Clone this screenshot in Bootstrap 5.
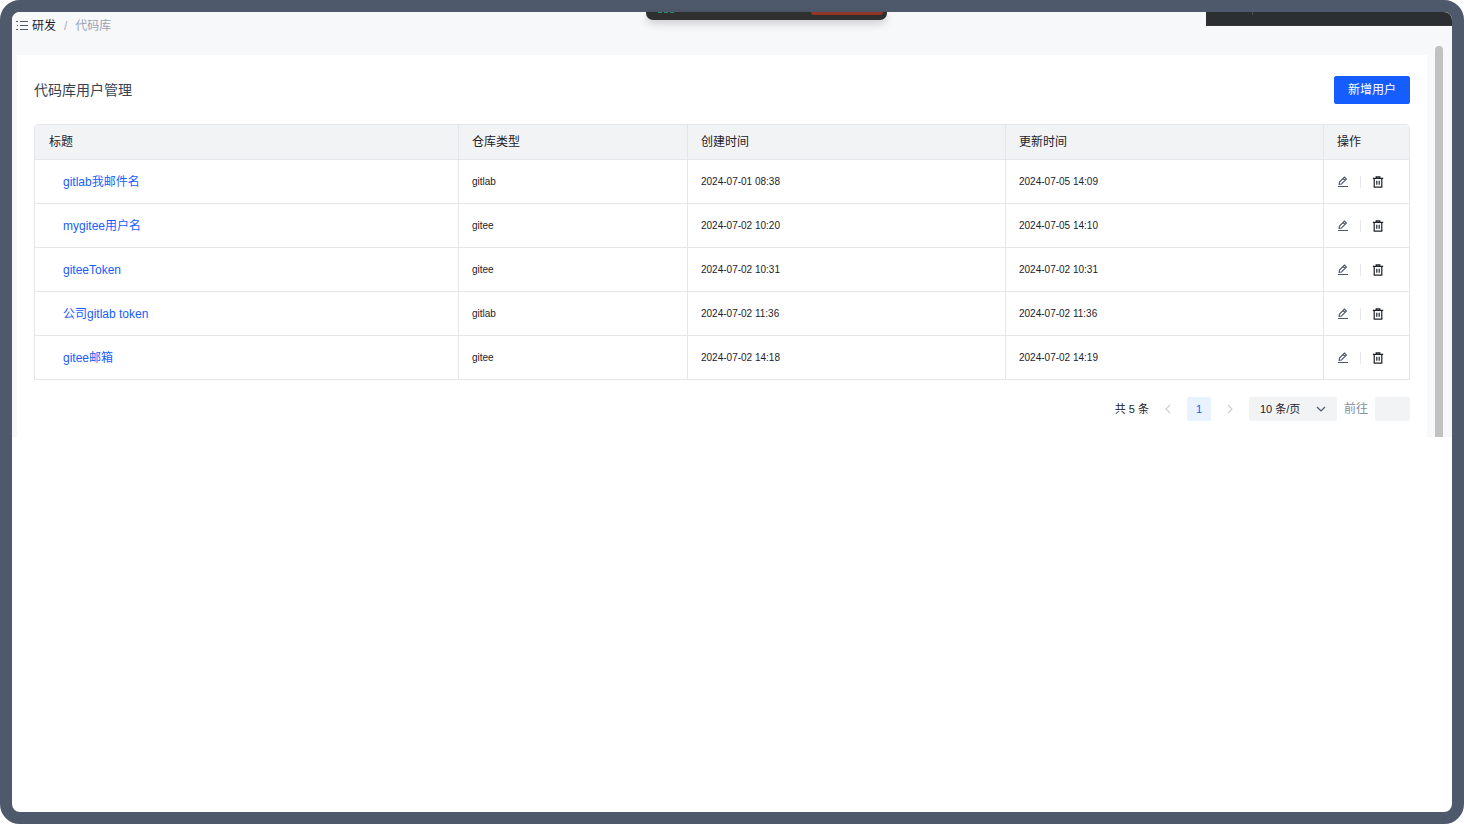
<!DOCTYPE html>
<html lang="zh-CN">
<head>
<meta charset="utf-8">
<meta name="viewport" content="width=device-width, initial-scale=1">
<title>代码库用户管理</title>
<link href="https://cdn.jsdelivr.net/npm/bootstrap@5.3.0/dist/css/bootstrap.min.css" rel="stylesheet">
<style>
  :root { --line: #e5e6eb; --fill: #f2f3f5; --ink: #1d2129; --blue: #165dff; --muted: #86909c; }
  body { font: 12px/20px "Liberation Sans", "Noto Sans CJK SC", sans-serif; color: var(--ink); background: #fff; }
  .frame { border: 12px solid #4e5a6b; border-radius: 20px; background: #fff; }
  .app { background: #f7f8fa; border-radius: 8px 8px 0 0; }
  .app-head { height: 34px; padding: 4px 4px 0; }
  .breadcrumb { --bs-breadcrumb-item-padding-x: 8px; --bs-breadcrumb-divider-color: #a9aeb8; --bs-breadcrumb-item-active-color: #98a3b5; font-size: 12px; }
  .breadcrumb a { color: var(--ink); }
  .list-icon { color: #4e5969; margin-right: 3px; }
  .call-bar { left: 634px; top: 0; width: 241px; height: 8px; background: #2f2f2f; border-radius: 0 0 7px 7px; box-shadow: 0 3px 9px #0003; }
  .call-end { right: 4px; top: 0; width: 72px; height: 3px; background: #943527; border-radius: 0 0 4px 4px; }
  .call-dots { left: 12px; top: 0; width: 17px; height: 1px; background: repeating-linear-gradient(90deg, #1f9460 0 4px, transparent 4px 6px); }
  .dark-bar { right: 0; top: 0; width: 246px; height: 14px; background: #2b2f32; border-bottom: 1px solid #3a3535; border-radius: 0 8px 0 0; }
  .dark-tick { left: 46px; top: 0; width: 1px; height: 3px; background: #4a4e51; }
  .panel { margin: 9px 8px 0 5px; padding: 21px 17px 16px; background: #fff; min-width: 0; }
  .panel h1 { font-size: 14px; line-height: 22px; color: #37424f; }
  .btn-add { --bs-btn-bg: var(--blue); --bs-btn-color: #fff; --bs-btn-hover-bg: #4080ff; --bs-btn-hover-color: #fff; --bs-btn-padding-x: 13px; --bs-btn-padding-y: 3px; --bs-btn-font-size: 12px; --bs-btn-line-height: 20px; --bs-btn-border-radius: 2px; --bs-btn-border-color: var(--blue); }
  .grid-box { border: 1px solid var(--line); border-radius: 4px 4px 0 0; overflow: hidden; margin-top: 20px; }
  .grid-box table { table-layout: fixed; --bs-table-bg: transparent; --bs-table-color: var(--ink); border-collapse: separate; border-spacing: 0; }
  .grid-box th, .grid-box td { padding: 0 13px; height: 44px; border-bottom: 1px solid var(--line); border-right: 1px solid var(--line); font-weight: 400; }
  .grid-box th { height: 35px; background: var(--fill); vertical-align: middle; }
  .grid-box th:first-child { padding-left: 14px; }
  .grid-box tr > :last-child { border-right: 0; }
  .grid-box tbody tr:last-child td { height: 43px; border-bottom: 0; }
  .grid-box td:first-child { padding-left: 28px; }
  .grid-box td.cell-sm { font-size: 10px; }
  .grid-box a { color: var(--blue); }
  .c-type { width: 229px; } .c-time { width: 318px; } .c-ops { width: 85px; }
  .icon-btn { width: 12px; height: 12px; color: #4e5969; }
  .icon-btn.del { color: var(--ink); }
  .sep { width: 1px; height: 12px; background: var(--line); margin: 0 11px; }
  svg { display: block; fill: none; stroke: currentColor; }
  .pager { margin-top: 17px; height: 24px; gap: 7px; font-size: 11px; }
  .pg { width: 24px; height: 24px; color: #c9cdd4; border-radius: 2px; }
  .pg.on { background: #e8f3ff; color: var(--blue); }
  .size-pick { width: 88px; height: 24px; border-radius: 2px; background: var(--fill) url("data:image/svg+xml,%3Csvg xmlns='http://www.w3.org/2000/svg' viewBox='0 0 10 10' fill='none' stroke='%234e5969' stroke-width='1.2'%3E%3Cpath d='M1 3l4 4 4-4'/%3E%3C/svg%3E") no-repeat right 11px center / 10px 10px; appearance: none; color: var(--ink); padding: 0 11px; }
  .jump-label { color: var(--muted); font-size: 12px; }
  .jump { width: 35px; height: 24px; background: var(--fill); border-radius: 2px; }
  .scroll-bar { width: 8px; margin-right: 9px; background: #c1c1c1; border-radius: 4px 4px 0 0; }
</style>
</head>
<body>
<div class="frame min-vh-100">
  <div class="app position-relative">
    <header class="app-head">
      <nav class="d-flex align-items-center" aria-label="breadcrumb">
        <svg class="list-icon" width="13" height="12" viewBox="0 0 13 12" stroke-width="1.2"><path d="M0 1.5h2M4 1.5h8M1 5.5h1M4 5.5h8M0 9.5h2M4 9.5h8"/></svg>
        <ol class="breadcrumb mb-0">
          <li class="breadcrumb-item"><a class="text-decoration-none" href="#">研发</a></li>
          <li class="breadcrumb-item active" aria-current="page">代码库</li>
        </ol>
      </nav>
    </header>
    <div class="call-bar position-absolute"><span class="call-dots position-absolute"></span><span class="call-end position-absolute"></span></div>
    <div class="dark-bar position-absolute"><span class="dark-tick position-absolute"></span></div>

    <div class="d-flex">
      <main class="panel flex-grow-1">
        <div class="d-flex justify-content-between align-items-center">
          <h1 class="mb-0 fw-normal">代码库用户管理</h1>
          <button type="button" class="btn btn-add">新增用户</button>
        </div>
        <div class="grid-box">
          <table class="table mb-0 align-middle">
            <thead>
              <tr><th scope="col">标题</th><th scope="col" class="c-type">仓库类型</th><th scope="col" class="c-time">创建时间</th><th scope="col" class="c-time">更新时间</th><th scope="col" class="c-ops">操作</th></tr>
            </thead>
            <tbody id="rows"></tbody>
          </table>
        </div>
        <div class="pager d-flex justify-content-end align-items-center">
          <span>共 5 条</span>
          <button type="button" class="pg btn p-0 border-0 d-flex align-items-center justify-content-center" aria-label="上一页"><svg width="8" height="10" viewBox="0 0 8 10" stroke-width="1.1"><path d="M6 1L2 5l4 4"/></svg></button>
          <button type="button" class="pg on border-0 p-0">1</button>
          <button type="button" class="pg btn p-0 border-0 d-flex align-items-center justify-content-center" aria-label="下一页"><svg width="8" height="10" viewBox="0 0 8 10" stroke-width="1.1"><path d="M2 1l4 4-4 4"/></svg></button>
          <select class="size-pick border-0" aria-label="每页条数"><option>10 条/页</option></select>
          <label for="jump" class="jump-label">前往</label>
          <input id="jump" class="jump border-0 p-0" type="text">
        </div>
      </main>
      <div class="scroll-bar flex-shrink-0"></div>
    </div>
  </div>
</div>
<script>
  const data = [
    ["gitlab我邮件名", "gitlab", "2024-07-01 08:38", "2024-07-05 14:09"],
    ["mygitee用户名", "gitee", "2024-07-02 10:20", "2024-07-05 14:10"],
    ["giteeToken", "gitee", "2024-07-02 10:31", "2024-07-02 10:31"],
    ["公司gitlab token", "gitlab", "2024-07-02 11:36", "2024-07-02 11:36"],
    ["gitee邮箱", "gitee", "2024-07-02 14:18", "2024-07-02 14:19"]
  ];
  const edit = '<svg width="12" height="12" viewBox="0 0 12 12" stroke-width="1.2"><path d="M1 10.5h10M2.2 8.3l.3-2.3L7.4 1.1l2 2-4.9 4.9zM6 2.5l2 2"/></svg>';
  const bin = '<svg width="12" height="12" viewBox="0 0 12 12" stroke-width="1.2"><path d="M.8 2.4h10.4M4.2 2V.8h3.6V2M2.2 2.4v8.8h7.6V2.4M4.8 4.8v4M7.2 4.8v4"/></svg>';
  document.getElementById("rows").innerHTML = data.map(([name, type, made, changed]) => `
    <tr><td><a class="text-decoration-none" href="#">${name}</a></td><td class="cell-sm">${type}</td><td class="cell-sm">${made}</td><td class="cell-sm">${changed}</td>
    <td><div class="d-flex align-items-center"><button type="button" class="icon-btn btn border-0 p-0 d-flex" aria-label="编辑">${edit}</button><span class="sep"></span><button type="button" class="icon-btn del btn border-0 p-0 d-flex" aria-label="删除">${bin}</button></div></td></tr>`).join("");
</script>
<script src="https://cdn.jsdelivr.net/npm/bootstrap@5.3.0/dist/js/bootstrap.bundle.min.js"></script>
</body>
</html>
